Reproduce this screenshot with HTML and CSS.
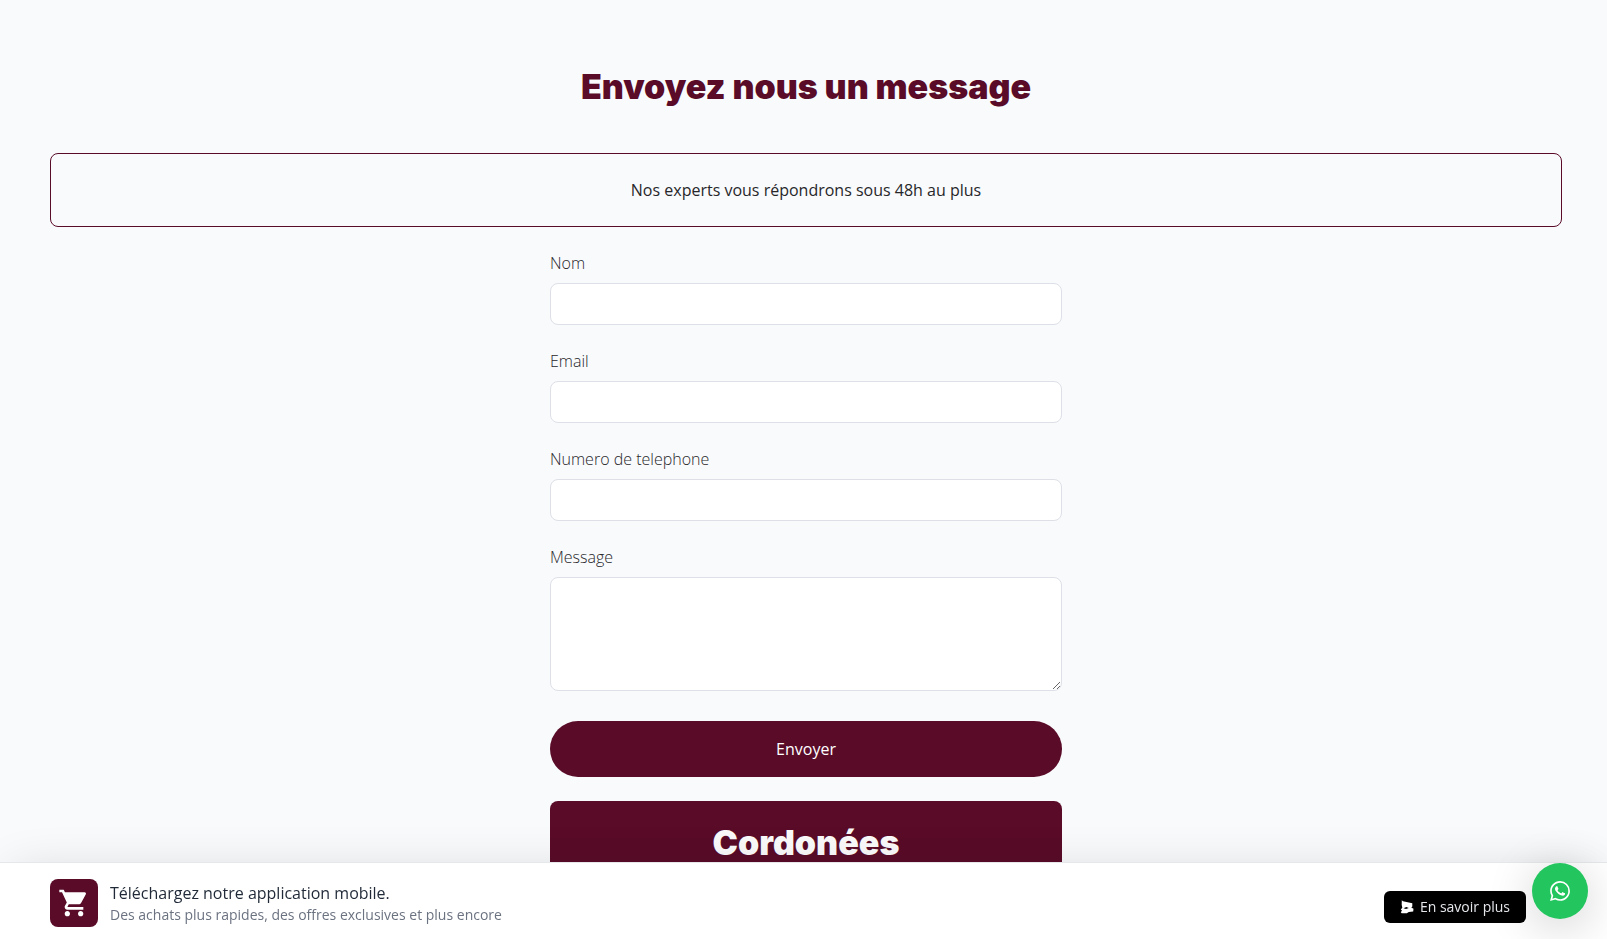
FILE: index.html
```
<!DOCTYPE html>
<html lang="fr">
<head>
<meta charset="utf-8">
<meta name="viewport" content="width=device-width, initial-scale=1">
<title>Contact</title>
<link rel="stylesheet" href="styles.css">
</head>
<body>
<main class="page">
  <h1 class="title">Envoyez nous un message</h1>
  <p class="notice">Nos experts vous répondrons sous 48h au plus</p>
  <div class="column">
    <form class="form">
      <div class="field">
        <label for="nom">Nom</label>
        <input class="control" id="nom" type="text">
      </div>
      <div class="field">
        <label for="email">Email</label>
        <input class="control" id="email" type="email">
      </div>
      <div class="field">
        <label for="tel">Numero de telephone</label>
        <input class="control" id="tel" type="tel">
      </div>
      <div class="field">
        <label for="message">Message</label>
        <textarea class="control" id="message" rows="4"></textarea>
      </div>
      <button class="submit" type="button">Envoyer</button>
    </form>
    <section class="card">
      <h2 class="title">Cordonées</h2>
    </section>
  </div>
</main>
<aside class="banner">
  <span class="app-icon">
    <svg viewBox="0 0 24 24" width="32" height="32" fill="currentColor" aria-hidden="true"><path d="M7 18c-1.100 0-1.990.9-1.990 2S5.900 22 7 22s2-.9 2-2-.9-2-2-2zM1 2v2h2l3.600 7.590-1.350 2.450c-.16.280-.25.610-.25.960 0 1.100.9 2 2 2h12v-2H7.420c-.14 0-.25-.11-.25-.25l.03-.12.900-1.630h7.450c.75 0 1.410-.41 1.750-1.030l3.580-6.490A1 1 0 0 0 20 4H5.210l-.94-2H1zm16 16c-1.100 0-1.990.9-1.990 2s.89 2 1.990 2 2-.9 2-2-.9-2-2-2z"/></svg>
  </span>
  <div class="banner-text">
    <p class="banner-title">Téléchargez notre application mobile.</p>
    <p class="banner-sub">Des achats plus rapides, des offres exclusives et plus encore</p>
  </div>
  <button class="more" type="button">
    <svg viewBox="0 0 14 14" width="14" height="14" fill="currentColor" aria-hidden="true"><path fill-rule="evenodd" d="M1.800.3 3 1.300 12.300 3.200v3.300l-1 1 2.200 1.200-.3 2.700-4.400.6-2 1.300H1.700l-.9-1 1.200-1.800-1.200-1 1.500-1.700-.6-3zM3.500 8.300l2.500.7 2.800-1L6.300 7z"/></svg>
    En savoir plus
  </button>
</aside>
<button class="whatsapp" type="button" aria-label="WhatsApp">
  <svg viewBox="0 0 24 24" width="20" height="20" fill="currentColor" aria-hidden="true"><path d="M17.472 14.382c-.297-.149-1.758-.867-2.030-.967-.273-.099-.471-.148-.670.150-.197.297-.767.966-.940 1.164-.173.199-.347.223-.644.075-.297-.150-1.255-.463-2.390-1.475-.883-.788-1.480-1.761-1.653-2.059-.173-.297-.018-.458.130-.606.134-.133.298-.347.446-.520.149-.174.198-.298.298-.497.099-.198.050-.371-.025-.520-.075-.149-.669-1.612-.916-2.207-.242-.579-.487-.500-.669-.510-.173-.008-.371-.010-.570-.010-.198 0-.520.074-.792.372-.272.297-1.040 1.016-1.040 2.479 0 1.462 1.065 2.875 1.213 3.074.149.198 2.096 3.200 5.077 4.487.709.306 1.262.489 1.694.625.712.227 1.360.195 1.871.118.571-.085 1.758-.719 2.006-1.413.248-.694.248-1.289.173-1.413-.074-.124-.272-.198-.570-.347M12.050 21.785h-.004a9.870 9.870 0 0 1-5.031-1.378l-.361-.214-3.741.982.998-3.648-.235-.374a9.860 9.860 0 0 1-1.510-5.260c.001-5.450 4.436-9.884 9.888-9.884a9.820 9.820 0 0 1 6.988 2.898 9.825 9.825 0 0 1 2.893 6.994c-.003 5.450-4.437 9.884-9.885 9.884M20.463 3.488A11.815 11.815 0 0 0 12.050 0C5.495 0 .160 5.335.157 11.892c0 2.096.547 4.142 1.588 5.945L.057 24l6.305-1.654a11.882 11.882 0 0 0 5.683 1.448h.005c6.554 0 11.890-5.335 11.893-11.893a11.821 11.821 0 0 0-3.480-8.413z"/></svg>
</button>
</body>
</html>
```
FILE: styles.css
```
:root {
  --wine: #590b27;
  --line: #dee0e8;
}
* { box-sizing: border-box; }
body {
  margin: 0;
  background: #f9fafc;
  color: #27272a;
  font: 16px/24px "Open Sans", "Noto Sans", sans-serif;
}
h1, h2, p { margin: 0; }
button, input, textarea { font: inherit; }
button { border: 0; cursor: pointer; }
svg { display: block; flex: none; }

.page { padding: 69px 45px 0 50px; }
.title {
  color: var(--wine);
  font: 900 34px/36px Inter, sans-serif;
  text-align: center;
}
.notice {
  margin-top: 48px;
  padding: 24px;
  border: 1px solid var(--wine);
  border-radius: 8px;
  font-weight: 500;
  text-align: center;
}
.column {
  max-width: 512px;
  margin: 24px auto 0;
}
.form { display: grid; gap: 24px; }
.field { display: grid; gap: 8px; }
.field label { font-weight: 300; }
.control {
  width: 100%;
  padding: 8px 12px;
  border: 1px solid var(--line);
  border-radius: 8px;
  background: #fff;
  color: inherit;
}
textarea.control { display: block; resize: vertical; }
.submit {
  margin-top: 6px;
  padding: 16px;
  border-radius: 28px;
  background: var(--wine);
  color: #fff;
}
.card {
  margin-top: 24px;
  padding: 24px;
  border-radius: 8px;
  background: var(--wine);
}
.card .title { color: #fafafa; }

.banner {
  position: fixed;
  inset: auto 0 0;
  display: flex;
  align-items: center;
  gap: 12px;
  padding: 16px 81px 12px 50px;
  border-top: 1px solid #e5e7eb;
  background: #fff;
  box-shadow: 0 0 50px -12px rgba(0, 0, 0, 0.16);
}
.app-icon {
  display: grid;
  place-items: center;
  flex: none;
  width: 48px;
  height: 48px;
  border-radius: 8px;
  background: var(--wine);
  color: #fff;
}
.banner-text { flex: 1; }
.banner-title { color: #1f2937; }
.banner-sub {
  color: #6b7280;
  font-size: 14px;
  line-height: 20px;
}
.more {
  display: flex;
  align-items: center;
  gap: 6px;
  margin-top: 8px;
  padding: 6px 16px;
  border-radius: 6px;
  background: #000;
  color: #e5e7eb;
  font-size: 14px;
  line-height: 20px;
}
.more svg { color: #fff; }
.whatsapp {
  position: fixed;
  right: 19px;
  bottom: 20px;
  display: grid;
  place-items: center;
  width: 56px;
  height: 56px;
  padding: 0;
  border-radius: 50%;
  background: #22c55e;
  color: #fff;
  box-shadow: 0 8px 48px rgba(0, 0, 0, 0.2);
}
```
